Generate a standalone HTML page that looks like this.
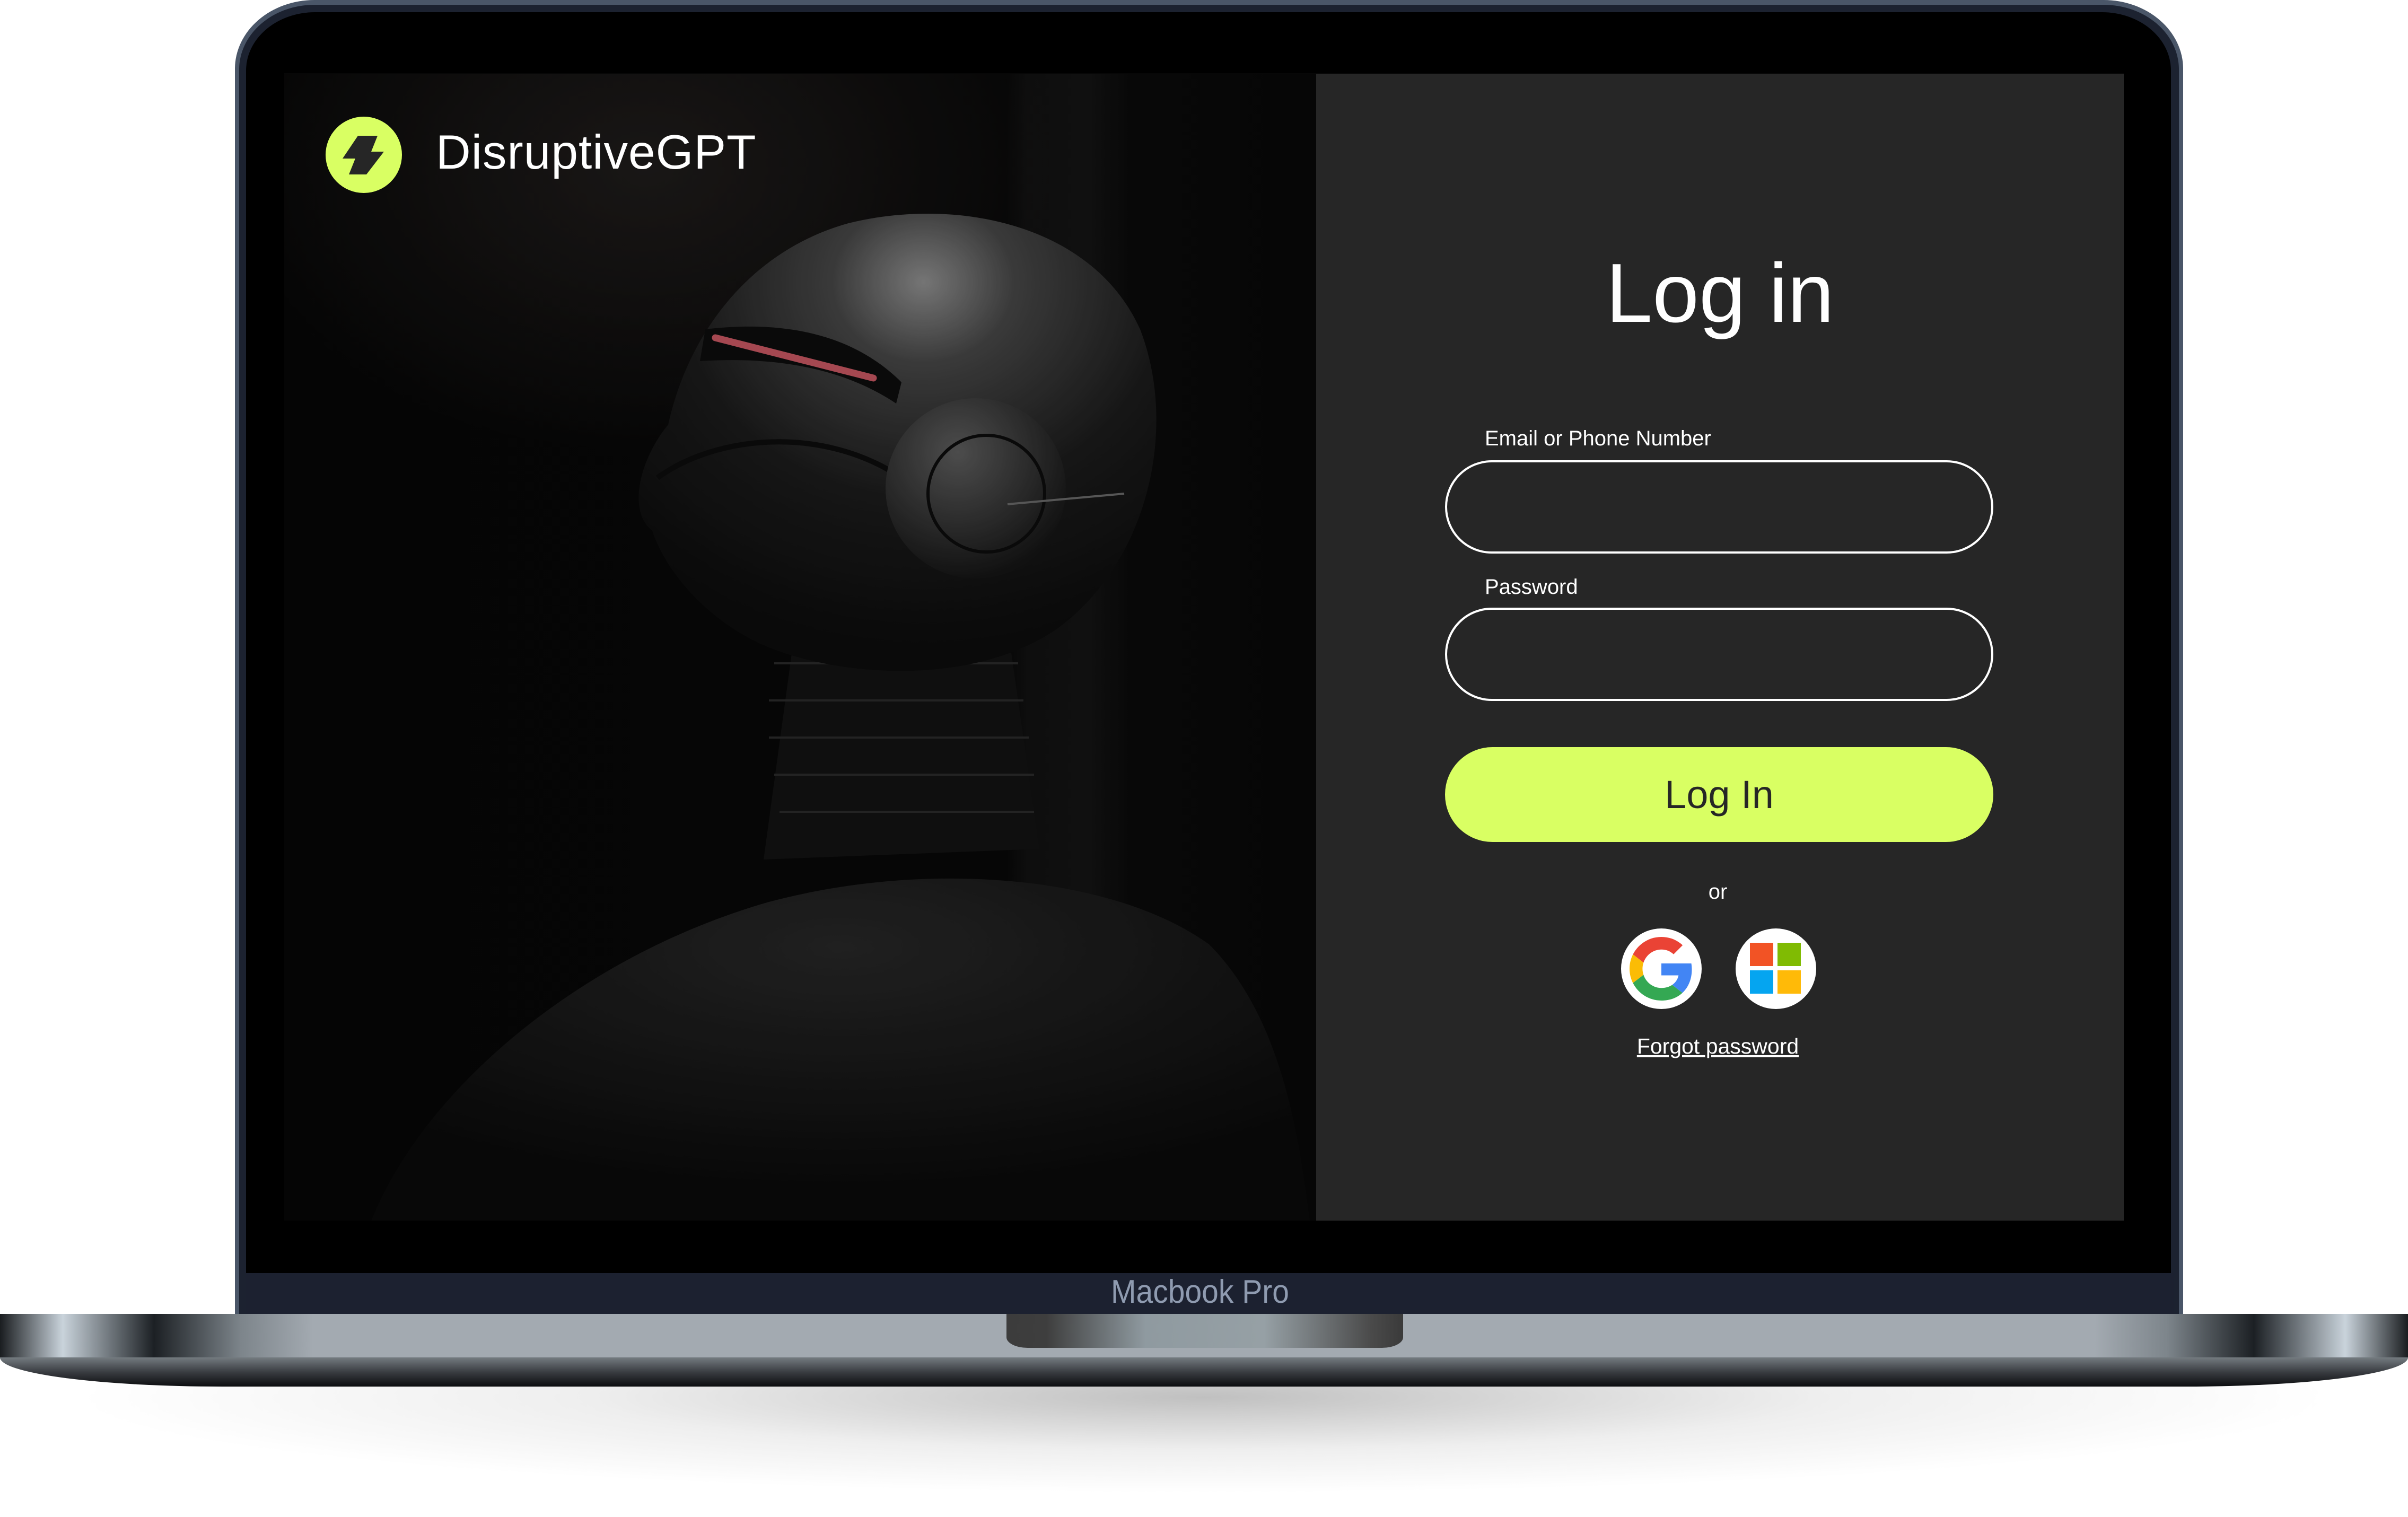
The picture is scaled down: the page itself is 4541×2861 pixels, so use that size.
<!DOCTYPE html>
<html><head><meta charset="utf-8"><style>
*{margin:0;padding:0;box-sizing:border-box}
body{width:4541px;height:2861px;background:#fff;position:relative;overflow:hidden;font-family:"Liberation Sans",sans-serif}
.a{position:absolute}
</style></head><body>
<div class="a" style="left:150px;top:2560px;width:4240px;height:300px;background:radial-gradient(ellipse 50% 60% at 50% 25%,rgba(150,150,150,.6),rgba(200,200,200,.3) 55%,rgba(255,255,255,0) 100%)"></div>
<div class="a" style="left:443px;top:0;width:3674px;height:2500px;background:#4a5668;border-radius:150px 150px 0 0/130px 130px 0 0"></div>
<div class="a" style="left:451px;top:9px;width:3658px;height:2491px;background:#1c2230;border-radius:142px 142px 0 0/122px 122px 0 0"></div>
<div class="a" style="left:464px;top:23px;width:3630px;height:2378px;background:#000;border-radius:130px 130px 0 0/110px 110px 0 0"></div>
<div class="a" style="left:536px;top:139px;width:1946px;height:2163px;background:radial-gradient(ellipse 40% 25% at 35% 8%,#1e1b1a,rgba(10,10,10,0) 100%),linear-gradient(90deg,#070707 0,#080808 70%,#111 72%,#131313 78%,#0a0a0a 82%,#080808 100%);overflow:hidden;border-top:1px solid #3a3a3a">
<svg width="1946" height="2163" viewBox="536 139 1946 2163" style="position:absolute;left:0;top:0">
<defs>
<radialGradient id="hd" cx="0.55" cy="0.15" r="0.8"><stop offset="0" stop-color="#8a8a8a"/><stop offset="0.22" stop-color="#444"/><stop offset="0.6" stop-color="#1a1a1a"/><stop offset="1" stop-color="#0c0c0c"/></radialGradient>
<radialGradient id="bd" cx="0.5" cy="0.2" r="0.7"><stop offset="0" stop-color="#262626"/><stop offset="1" stop-color="#0a0a0a"/></radialGradient>
<radialGradient id="ear" cx="0.4" cy="0.3" r="0.7"><stop offset="0" stop-color="#5a5a5a"/><stop offset="1" stop-color="#151515"/></radialGradient>
</defs>
<path d="M700 2302 C800 2050 1100 1800 1450 1700 C1750 1620 2100 1650 2280 1780 C2420 1920 2450 2150 2470 2302 Z" fill="url(#bd)"/>
<path d="M1500 1180 L1900 1180 L1960 1600 L1440 1620 Z" fill="#121212"/>
<g stroke="#2a2a2a" stroke-width="4" fill="none">
<path d="M1460 1250 H1920 M1450 1320 H1930 M1450 1390 H1940 M1460 1460 H1950 M1470 1530 H1950"/>
</g>
<path d="M1230 1000 C1180 960 1210 860 1260 800 C1300 620 1420 470 1600 420 C1800 370 2060 420 2150 620 C2220 800 2170 1050 2000 1180 C1850 1290 1600 1280 1450 1220 C1350 1180 1260 1090 1230 1000 Z" fill="url(#hd)"/>
<path d="M1330 620 C1500 600 1620 640 1700 720 L1690 760 C1600 700 1480 670 1320 680 Z" fill="#0c0c0c"/>
<path d="M1349 636 L1647 712" stroke="#c25560" stroke-width="13" stroke-linecap="round"/>
<path d="M1240 900 C1350 820 1550 800 1700 900" stroke="#0c0c0c" stroke-width="10" fill="none"/>
<circle cx="1840" cy="920" r="170" fill="url(#ear)"/>
<circle cx="1860" cy="930" r="110" fill="none" stroke="#0c0c0c" stroke-width="6"/>
<path d="M1900 950 L2120 930" stroke="#666" stroke-width="4"/>
</svg>
<div style="position:absolute;inset:0;background:rgba(0,0,0,.15)"></div>
</div>
<div class="a" style="left:2482px;top:139px;width:1523px;height:2163px;background:#262626;border-top:1px solid #444"></div>
<svg class="a" style="left:614px;top:220px" width="144" height="144" viewBox="614 220 144 144">
<ellipse cx="686" cy="292" rx="72" ry="72" fill="#d9ff63"/>
<polygon points="675,256 712,256 700,286 724,286 691,329 658,329 670,299 646,299" fill="#262626"/>
</svg>
<div class="a" style="left:822px;top:228px;font-size:91px;line-height:120px;color:#fff;white-space:nowrap;letter-spacing:1px">DisruptiveGPT</div>
<div class="a" style="left:2482px;width:1523px;top:463px;text-align:center;font-size:158px;line-height:180px;color:#fff">Log in</div>
<div class="a" style="left:2800px;top:802px;font-size:40px;line-height:50px;color:#fff;white-space:nowrap">Email or Phone Number</div>
<div class="a" style="left:2725px;top:868px;width:1034px;height:176px;border:4px solid #fff;border-radius:88px"></div>
<div class="a" style="left:2800px;top:1082px;font-size:40px;line-height:50px;color:#fff">Password</div>
<div class="a" style="left:2725px;top:1146px;width:1034px;height:176px;border:4px solid #fff;border-radius:88px"></div>
<div class="a" style="left:2725px;top:1409px;width:1034px;height:179px;background:#d9ff63;border-radius:90px;text-align:center;font-size:74px;line-height:179px;color:#262626">Log In</div>
<div class="a" style="left:2478px;width:1523px;top:1657px;text-align:center;font-size:40px;line-height:50px;color:#fff">or</div>
<svg class="a" style="left:3057px;top:1751px" width="152" height="152" viewBox="0 0 152 152">
<circle cx="76" cy="76" r="76" fill="#fff"/>
<g transform="translate(16,16) scale(2.5)">
<path fill="#EA4335" d="M24 9.5c3.54 0 6.71 1.22 9.21 3.6l6.85-6.85C35.9 2.38 30.47 0 24 0 14.62 0 6.51 5.38 2.56 13.22l7.98 6.19C12.43 13.72 17.74 9.5 24 9.5z"/>
<path fill="#4285F4" d="M46.98 24.55c0-1.570-.15-3.09-.38-4.55H24v9.020h12.94c-.58 2.96-2.26 5.48-4.78 7.180l7.73 6c4.51-4.18 7.09-10.36 7.09-17.65z"/>
<path fill="#FBBC05" d="M10.53 28.59c-.48-1.45-.76-2.99-.76-4.59s.27-3.14.76-4.59l-7.98-6.19C.92 16.46 0 20.12 0 24c0 3.88.92 7.54 2.56 10.78l7.97-6.19z"/>
<path fill="#34A853" d="M24 48c6.48 0 11.93-2.13 15.89-5.81l-7.73-6c-2.15 1.45-4.920 2.3-8.16 2.3-6.26 0-11.57-4.22-13.47-9.91l-7.98 6.19C6.51 42.62 14.62 48 24 48z"/>
</g></svg>
<svg class="a" style="left:3273px;top:1751px" width="152" height="152" viewBox="3273 1751 152 152">
<circle cx="3349" cy="1827" r="76" fill="#fff"/>
<rect x="3300" y="1778" width="44" height="44" fill="#f25325"/>
<rect x="3352" y="1778" width="44" height="44" fill="#80bb03"/>
<rect x="3300" y="1830" width="44" height="44" fill="#05a5f0"/>
<rect x="3352" y="1830" width="44" height="44" fill="#ffba08"/>
</svg>
<div class="a" style="left:2478px;width:1523px;top:1950px;text-align:center;font-size:41px;line-height:46px;color:#fff;text-decoration:underline">Forgot password</div>
<div class="a" style="left:463px;top:2401px;width:3637px;height:77px;background:#1c2130;"></div>
<div class="a" style="left:1963px;top:2398px;width:600px;height:77px;text-align:center;font-size:62px;line-height:77px;color:#8f9bb0;transform:scaleX(0.92)">Macbook Pro</div>
<div class="a" style="left:0;top:2478px;width:4541px;height:82px;background:linear-gradient(90deg,#1a1d20 0,#c9d3db 2.6%,#1c2024 6.4%,#7d858b 10%,#a3aab1 13%,#a3aab1 87%,#7d858b 90%,#1c2024 93.6%,#c9d3db 97.4%,#1a1d20 100%)"></div>
<div class="a" style="left:1898px;top:2478px;width:748px;height:64px;background:linear-gradient(90deg,#3c3c3c 0,#3e3e3e 10%,#8f9aa0 35%,#96a0a5 65%,#4a4a4a 92%,#3a3a3a 100%);border-radius:0 0 40px 40px/0 0 20px 20px"></div>
<div class="a" style="left:0;top:2560px;width:4541px;height:55px;background:linear-gradient(180deg,#747b80 0,#3a3d42 50%,#0c0d0f 100%);border-radius:0 0 420px 420px/0 0 55px 55px"></div>
</body></html>
